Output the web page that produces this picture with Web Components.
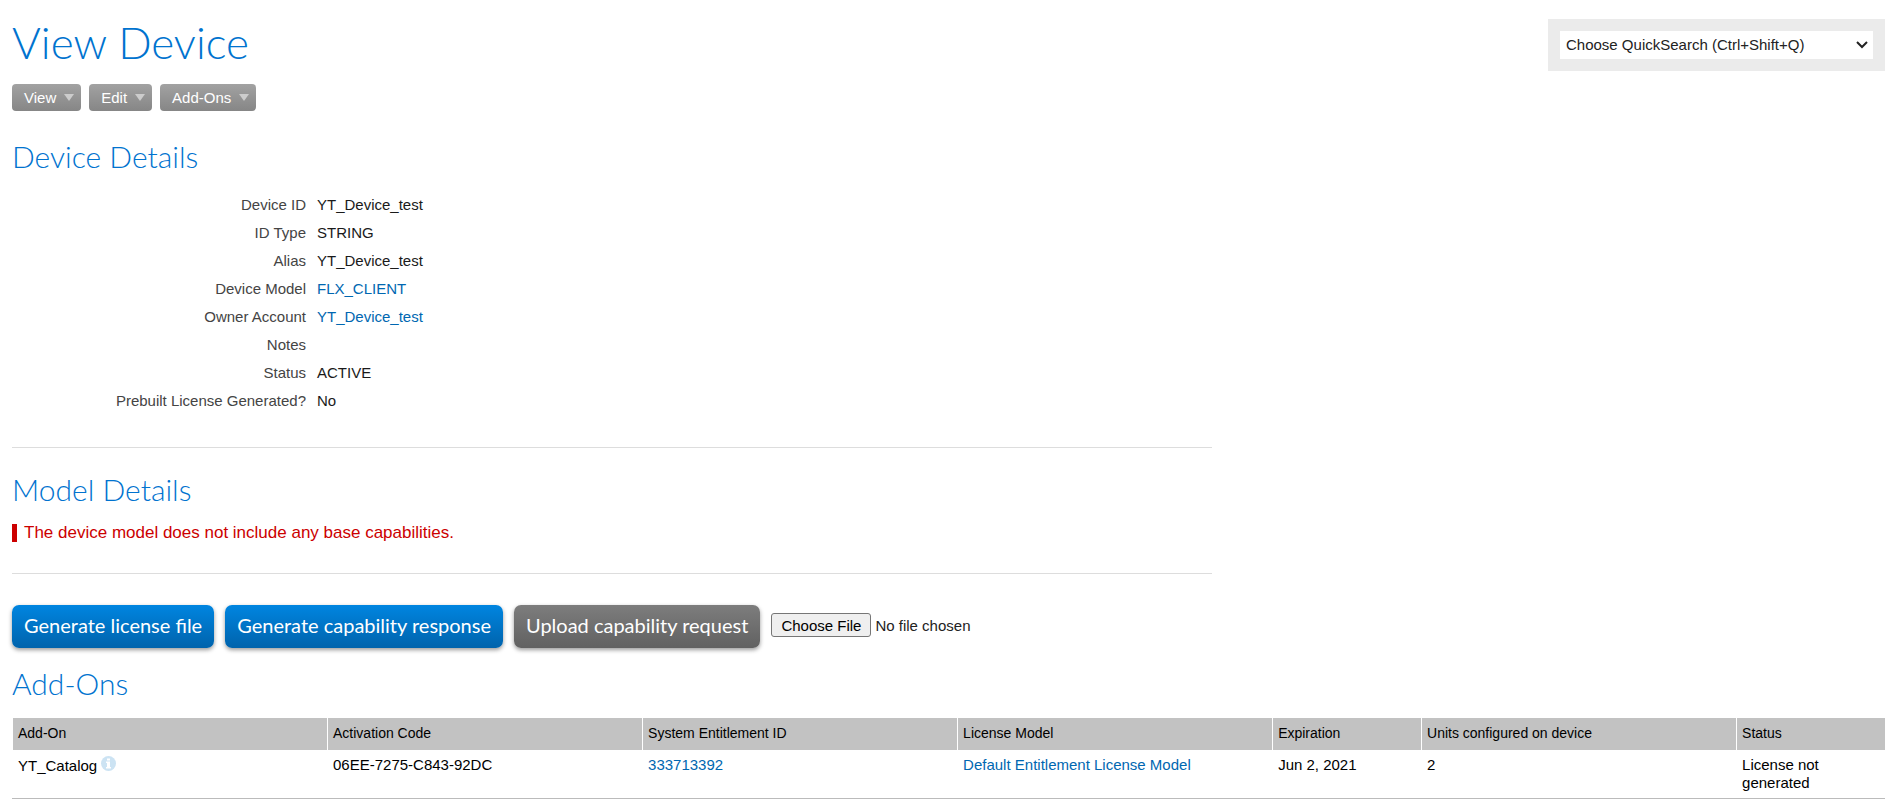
<!DOCTYPE html>
<html lang="en">
<head>
<meta charset="utf-8">
<title>View Device</title>
<style>
  body {
    margin: 0;
    background: #fff;
    color: #1a1a1a;
    font: 15px/18px "Liberation Sans", Arial, sans-serif;
    --brand: #0073cf;
    --link: #0067b1;
    --heading-font: Lato, "Open Sans", sans-serif;
  }
</style>
</head>
<body>
<device-page></device-page>

<template id="device-page">
  <style>
    :host { display: block; padding: 19px 8px 0 12px; }
    header { display: flex; justify-content: space-between; align-items: flex-start; gap: 24px; }
    h1 { margin: 0; font: 300 44px/46px var(--heading-font); color: var(--brand); }
    nav { display: flex; gap: 8px; margin-top: 19px; }
    section { max-width: 1200px; border-bottom: 1px solid #ddd; }
    .device { margin-top: 27px; padding-bottom: 32px; }
    .model { padding: 23px 0 31px; }
    .actions { display: flex; align-items: flex-start; gap: 11px; margin: 31px 0 17px; }
  </style>
  <header>
    <div>
      <h1>View Device</h1>
      <nav aria-label="Device actions">
        <menu-button>View</menu-button>
        <menu-button>Edit</menu-button>
        <menu-button>Add-Ons</menu-button>
      </nav>
    </div>
    <quick-search></quick-search>
  </header>
  <main>
    <section class="device">
      <section-heading>Device Details</section-heading>
      <detail-row label="Device ID">YT_Device_test</detail-row>
      <detail-row label="ID Type">STRING</detail-row>
      <detail-row label="Alias">YT_Device_test</detail-row>
      <detail-row label="Device Model" href="#model">FLX_CLIENT</detail-row>
      <detail-row label="Owner Account" href="#owner">YT_Device_test</detail-row>
      <detail-row label="Notes"></detail-row>
      <detail-row label="Status">ACTIVE</detail-row>
      <detail-row label="Prebuilt License Generated?">No</detail-row>
    </section>
    <section class="model">
      <section-heading>Model Details</section-heading>
      <alert-message>The device model does not include any base capabilities.</alert-message>
    </section>
    <div class="actions">
      <action-button>Generate license file</action-button>
      <action-button>Generate capability response</action-button>
      <action-button tone="neutral">Upload capability request</action-button>
      <file-picker></file-picker>
    </div>
    <section-heading>Add-Ons</section-heading>
    <addon-table></addon-table>
  </main>
</template>

<template id="section-heading">
  <style>
    :host { display: block; margin-bottom: 17px; }
    h2 { margin: 0; font: 300 30px/36px var(--heading-font); color: var(--brand); }
  </style>
  <h2><slot></slot></h2>
</template>

<template id="menu-button">
  <style>
    :host { display: block; }
    button {
      display: flex; align-items: center; gap: 8px; height: 27px; padding: 0 7px 0 12px;
      border: 0; border-radius: 4px; background: linear-gradient(#a2a2a2, #868686);
      color: #fff; font: inherit; cursor: pointer;
    }
    svg { width: 10px; height: 7px; fill: #ccc; }
  </style>
  <button type="button" aria-haspopup="true"><slot></slot><svg viewBox="0 0 10 7" aria-hidden="true"><path d="M0 0H10L5 7Z"/></svg></button>
</template>

<template id="quick-search">
  <style>
    :host { display: grid; align-items: center; box-sizing: border-box; width: 337px; padding: 12px; background: #ebebeb; }
    select, svg { grid-area: 1 / 1; }
    select {
      appearance: none; box-sizing: border-box; width: 100%; height: 28px; padding: 0 24px 1px 6px;
      border: 0; border-radius: 0; background: #fff; color: #222; font: inherit;
    }
    svg { justify-self: end; margin-right: 5px; pointer-events: none; }
  </style>
  <select aria-label="QuickSearch"><option>Choose QuickSearch (Ctrl+Shift+Q)</option></select>
  <svg width="12" height="8" viewBox="0 0 12 8" fill="none" stroke="#222" stroke-width="2" aria-hidden="true"><path d="M1 1L6 6L11 1"/></svg>
</template>

<template id="detail-row">
  <style>
    :host { display: block; }
    dl { display: grid; grid-template-columns: 294px 1fr; gap: 11px; margin: 0; line-height: 28px; }
    dt { color: #444; text-align: right; }
    dd { margin: 0; }
    a { color: var(--link); text-decoration: none; }
  </style>
  <dl><dt></dt><dd><slot></slot></dd></dl>
</template>

<template id="alert-message">
  <style>
    :host { display: block; padding-left: 7px; border-left: 5px solid #c00; color: #c00; font-size: 17px; line-height: 18px; }
  </style>
  <slot></slot>
</template>

<template id="action-button">
  <style>
    :host { display: block; }
    button {
      display: block; height: 43px; padding: 0 12px 4px; border: 0; border-radius: 7px;
      background: linear-gradient(#0085e0, #0063ac); box-shadow: 0 2px 4px rgba(0, 0, 0, .4);
      color: #fff; font: 400 20px/24px var(--heading-font); white-space: nowrap; cursor: pointer;
    }
    :host([tone="neutral"]) button { background: linear-gradient(#7d7d7d, #616161); }
  </style>
  <button type="button"><slot></slot></button>
</template>

<template id="file-picker">
  <style>
    :host { display: block; padding-top: 8px; }
    input { display: block; font: inherit; line-height: 24px; color: #222; }
    input::file-selector-button {
      box-sizing: border-box; height: 24px; margin: 0 4px 0 0; padding: 0 9px;
      border: 1px solid #767676; border-radius: 3px; background: #efefef; color: #000; font: inherit;
    }
  </style>
  <input type="file" aria-label="Capability request file">
</template>

<template id="info-icon">
  <style>
    :host { display: inline-block; width: 15px; height: 15px; vertical-align: 0; }
    svg { display: block; }
  </style>
  <svg viewBox="0 0 15 15" role="img" aria-label="Information"><circle cx="7.5" cy="7.5" r="7.5" fill="#cce3f3"/><path d="M6 2.5H9V4.5H6ZM5 5.5H9V11H10V12.5H5V11H6V7H5Z" fill="#fff"/></svg>
</template>

<template id="addon-table">
  <style>
    :host { display: block; }
    table { width: 100%; table-layout: fixed; border-collapse: separate; border-spacing: 0; }
    col { width: 16.82%; }
    col.narrow { width: 7.95%; }
    th, td { box-sizing: border-box; text-align: left; vertical-align: top; font-weight: 400; }
    th { padding: 6px 5px 8px; background: #c2c2c2; color: #000; border-left: 1px solid #fff; font-size: 14px; }
    td { padding: 6px; border-bottom: 1px solid #bbb; color: #000; }
    a { color: var(--link); text-decoration: none; }
  </style>
  <table>
    <colgroup><col><col><col><col><col class="narrow"><col><col class="narrow"></colgroup>
    <thead>
      <tr><th>Add-On</th><th>Activation Code</th><th>System Entitlement ID</th><th>License Model</th><th>Expiration</th><th>Units configured on device</th><th>Status</th></tr>
    </thead>
    <tbody>
      <tr>
        <td>YT_Catalog <info-icon></info-icon></td>
        <td>06EE-7275-C843-92DC</td>
        <td><a href="#entitlement">333713392</a></td>
        <td><a href="#license-model">Default Entitlement License Model</a></td>
        <td>Jun 2, 2021</td>
        <td>2</td>
        <td>License not generated</td>
      </tr>
    </tbody>
  </table>
</template>

<script>
  class TemplateElement extends HTMLElement {
    constructor() {
      super();
      const template = document.getElementById(this.localName);
      this.attachShadow({ mode: 'open' }).append(document.importNode(template.content, true));
    }
  }

  class DetailRow extends TemplateElement {
    connectedCallback() {
      this.shadowRoot.querySelector('dt').textContent = this.getAttribute('label');
      if (this.hasAttribute('href')) {
        const slot = this.shadowRoot.querySelector('slot');
        const link = document.createElement('a');
        link.href = this.getAttribute('href');
        slot.replaceWith(link);
        link.append(slot);
      }
    }
  }

  customElements.define('detail-row', DetailRow);
  for (const name of ['section-heading', 'menu-button', 'quick-search', 'alert-message',
    'action-button', 'file-picker', 'info-icon', 'addon-table', 'device-page']) {
    customElements.define(name, class extends TemplateElement {});
  }
</script>
</body>
</html>
